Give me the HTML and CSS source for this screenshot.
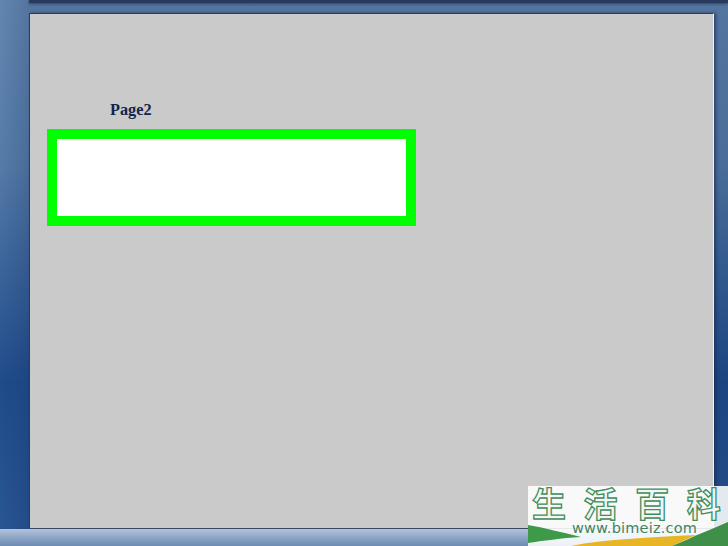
FILE: index.html
```html
<!DOCTYPE html>
<html lang="zh-CN">
<head>
    <meta charset="UTF-8">
    <title>Page2</title>
    <link rel="stylesheet" href="styles.css">
</head>
<body>
    <!-- Area de trabalho -->
    <div class="workspace">
        <div class="top-edge"></div>
        <div class="slide">
            <div class="slide-title">Page2</div>
            <div class="text-box"></div>
        </div>
    </div>

    <div class="status-bar"></div>

    <!-- Marca de agua -->
    <div class="watermark">
        <svg class="wm-swoosh" width="200" height="60" viewBox="0 0 200 60">
            <path d="M0 39 C18 42 36 47 53 51 C34 52 14 55 0 57 Z" fill="#3c9a48"/>
            <path d="M43 60 C62 56 82 54 100 53 C122 51 146 50 168 49 L144 60 Z" fill="#e8b624"/>
            <path d="M144 60 C154 56 162 52 169 49 C180 45 190 40 200 36 L200 60 Z" fill="#3f8f48"/>
        </svg>
        <div class="wm-title">
            <span>生</span><span>活</span><span>百</span><span>科</span>
        </div>
        <div class="wm-url">www.bimeiz.com</div>
    </div>
</body>
</html>
```

FILE: styles.css
```css
html, body {
    margin: 0;
    padding: 0;
}

body {
    width: 728px;
    height: 546px;
    overflow: hidden;
    position: relative;
    display: flex;
    flex-direction: column;
    background:
        linear-gradient(90deg, rgba(10, 30, 70, 0) 0, rgba(10, 30, 70, 0.16) 28px),
        linear-gradient(180deg, #6286b0 0%, #557ca9 30%, #204c8c 70%, #2a5795 100%);
}

.workspace {
    flex: 1;
    display: flex;
    flex-direction: column;
    padding: 0 14px 0 29px;
    min-height: 0;
}

.top-edge {
    height: 3px;
    margin: 0 -14px 10px 0;
    background: #2a3a5e;
    box-shadow: 0 1px 3px rgba(30, 45, 80, 0.7);
}

.slide {
    flex: 1;
    box-sizing: border-box;
    background: #cacaca;
    border-top: 1px solid #2c3b5c;
    border-left: 1px solid #2c3b5c;
    border-right: 1px solid #f1f1f1;
    border-bottom: 1px solid #3c4664;
    box-shadow: 2px 0 3px rgba(20, 35, 70, 0.6);
    padding: 87px 0 0 17px;
}

.slide-title {
    margin-left: 63px;
    height: 28px;
    font-family: "Liberation Serif", serif;
    font-size: 16.3px;
    font-weight: bold;
    line-height: 18px;
    color: #14244a;
}

.text-box {
    box-sizing: border-box;
    width: 369px;
    height: 97px;
    background: #fff;
    border: 10px solid #00ff00;
}

.status-bar {
    height: 17px;
    background: linear-gradient(180deg, #b4c4da 0%, #8ea6c6 50%, #6d8bb2 100%);
}

/* watermark */
.watermark {
    position: absolute;
    right: 0;
    bottom: 0;
    width: 200px;
    height: 60px;
    background: rgba(255, 255, 255, 0.88);
}

.wm-swoosh {
    position: absolute;
    left: 0;
    top: 0;
}

.wm-title {
    position: relative;
    display: flex;
    gap: 17.6px;
    padding-left: 4px;
    font-family: "Noto Sans CJK SC", sans-serif;
    font-size: 34px;
    font-weight: bold;
    line-height: 34px;
    color: #f4f5f7;
    -webkit-text-stroke: 1.3px #3f8f5b;
}

.wm-title span {
    display: block;
    width: 34px;
    height: 34px;
}

.wm-url {
    position: relative;
    margin-left: 44px;
    font-family: "DejaVu Sans", sans-serif;
    font-size: 14.5px;
    letter-spacing: 0.2px;
    line-height: 17px;
    color: #3d8560;
}
```
